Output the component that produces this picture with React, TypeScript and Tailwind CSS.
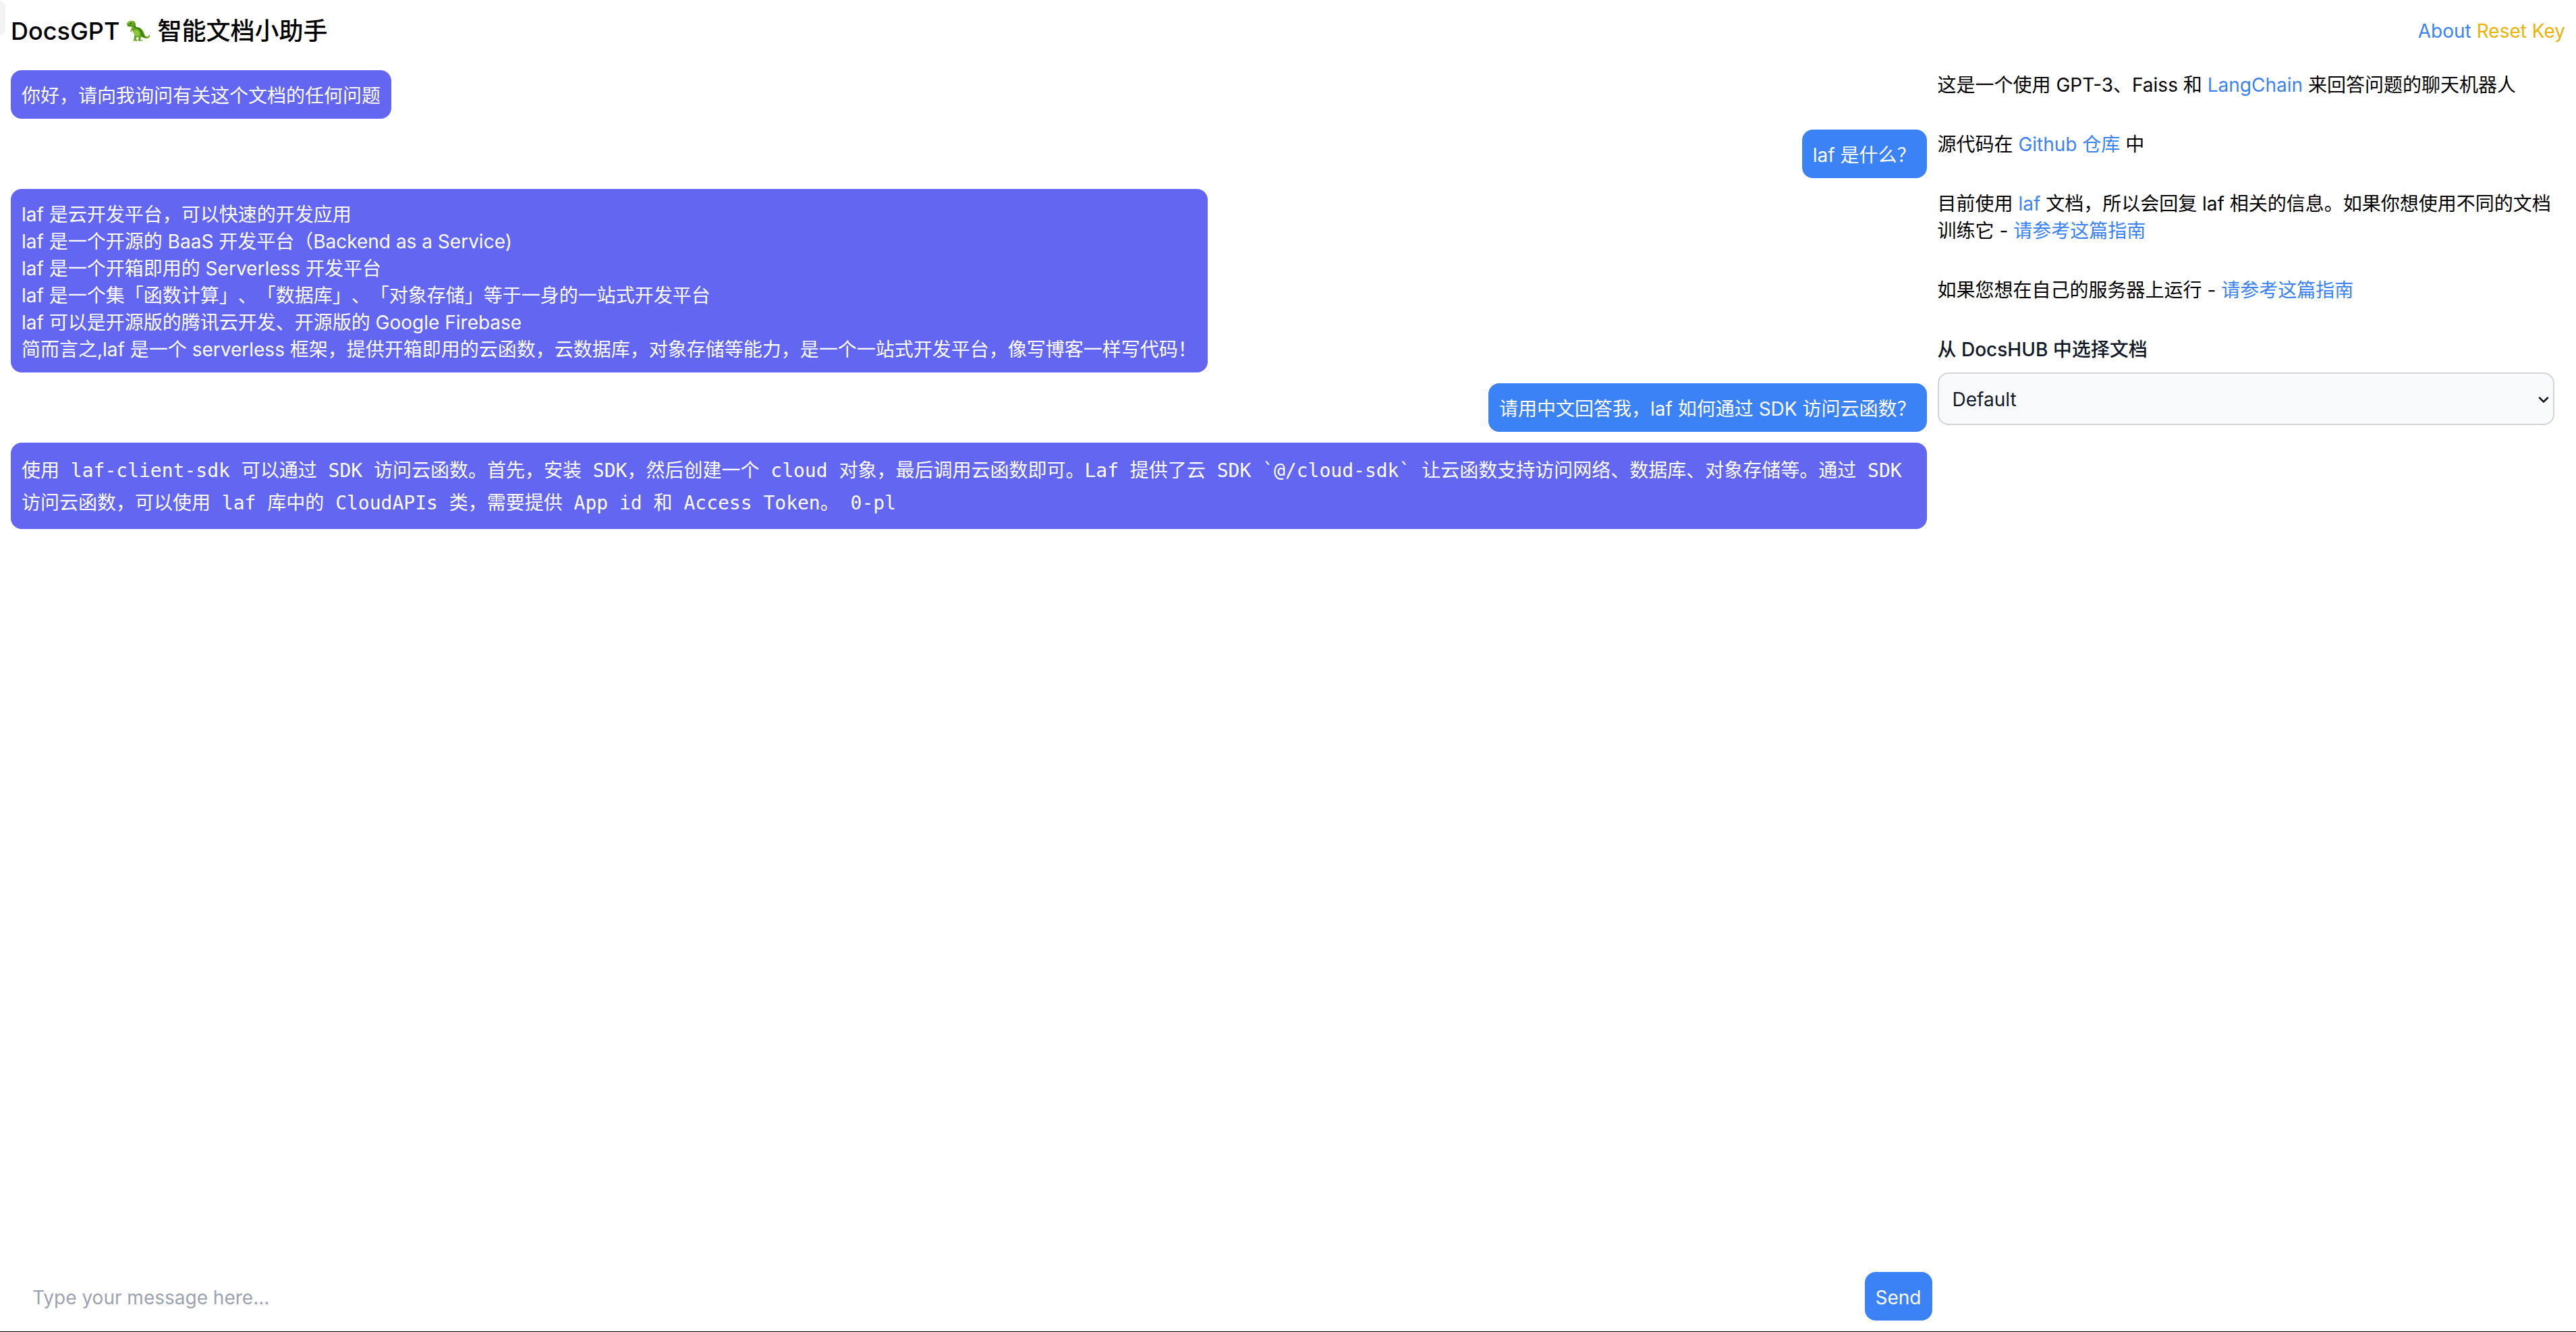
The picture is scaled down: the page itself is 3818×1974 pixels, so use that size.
import { type ReactNode, useState } from "react";

type Message = { from: "bot" | "user"; mono?: boolean; lines: string[] };

const messages: Message[] = [
  { from: "bot", lines: ["你好，请向我询问有关这个文档的任何问题"] },
  { from: "user", lines: ["laf 是什么？"] },
  {
    from: "bot",
    lines: [
      "laf 是云开发平台，可以快速的开发应用",
      "laf 是一个开源的 BaaS 开发平台（Backend as a Service)",
      "laf 是一个开箱即用的 Serverless 开发平台",
      "laf 是一个集「函数计算」、「数据库」、「对象存储」等于一身的一站式开发平台",
      "laf 可以是开源版的腾讯云开发、开源版的 Google Firebase",
      "简而言之,laf 是一个 serverless 框架，提供开箱即用的云函数，云数据库，对象存储等能力，是一个一站式开发平台，像写博客一样写代码！",
    ],
  },
  { from: "user", lines: ["请用中文回答我，laf 如何通过 SDK 访问云函数？"] },
  {
    from: "bot",
    mono: true,
    lines: [
      "使用 laf-client-sdk 可以通过 SDK 访问云函数。首先，安装 SDK，然后创建一个 cloud 对象，最后调用云函数即可。Laf 提供了云 SDK `@/cloud-sdk` 让云函数支持访问网络、数据库、对象存储等。通过 SDK 访问云函数，可以使用 laf 库中的 CloudAPIs 类，需要提供 App id 和 Access Token。 0-pl",
    ],
  },
];

function Bubble({ message }: { message: Message }) {
  const place =
    message.from === "user" ? "self-end bg-[#3b82f6]" : "self-start bg-[#6366f1]";
  const face = message.mono
    ? "font-['DejaVu_Sans_Mono','Noto_Sans_CJK_SC',monospace] leading-[48px]"
    : "leading-10";
  return (
    <div className={`rounded-2xl px-4 pt-[18px] pb-[14px] text-white ${place} ${face}`}>
      {message.lines.map((line) => (
        <p key={line}>{line}</p>
      ))}
    </div>
  );
}

function TextLink({ children }: { children: ReactNode }) {
  return (
    <a href="#" className="text-[#3b82f6]">
      {children}
    </a>
  );
}

function Dinosaur() {
  return (
    <svg viewBox="0 0 36 36" className="mx-2.5 size-9 shrink-0" role="img" aria-label="T-Rex">
      <path
        d="M1 7C2 4 6 2 9 3c3 0 5 2 5 5-.3 2-1 3 1 4 4 0 8 2 10 6 2 3 2 6 4 8 2 1 4 0 5-2 .8-1 1.600 0 1.200 1.200C34 29 30 30 26 28c-2-.6-3-1.500-4-1l-1 3 3 1.500c.8 1-.5 1.500-2 1.200h-4l-.3-2 1-3-3-1-1 3 2 2c.3 1-1 1.300-3 1.100h-2.500l-.2-2 1-2c-.7-2 .2-4 1-5.500-2-2-3-4-3-6l-2 .4-.4 2-1.400-1 .8-2.300C7 15.500 8 14 9 13l-2-1.600-4.500.2L1.600 10Z"
        fill="#63a51b"
      />
      <path
        d="M14 9c-.4 3 1 4 3 4 5 1 7 5 8 9 1 3 3 5 6 5-4 2-8-1-9-4-1-5-3-8-7-9-3-1-4-2-4-4Z"
        fill="#3c7d12"
      />
      <path d="M12 17c2-2 5-1 7 1 2 3 1 7-2 8-3 0-6-3-6.500-6Z" fill="#8cc63b" />
      <path d="M3 9.400l5 .6" stroke="#386f13" strokeWidth="1" fill="none" />
      <path d="M2 6.500c2-2 5-3 8-1.500" stroke="#91c944" strokeWidth="1.200" fill="none" />
      <circle cx="6.500" cy="6.500" r="1" fill="#23420d" />
      <path d="M13 32l1 .7M21 31.500l2 .7" stroke="#e7e3bd" strokeWidth="1" fill="none" />
    </svg>
  );
}

export default function App() {
  const [text, setText] = useState("");
  return (
    <div
      lang="zh-CN"
      className="relative flex min-h-screen flex-col border-b border-black bg-white font-[Inter,'Noto_Sans_CJK_SC',sans-serif] text-[28px] leading-10 text-black [text-spacing-trim:space-all]"
    >
      <span className="absolute top-0.5 left-0 h-[50px] w-2 rounded-r-lg bg-[#f3f3f3]" />
      <header className="flex items-center justify-between px-4 pt-[18px] pb-[14px]">
        <h1 className="flex items-center text-[36px] leading-[56px] font-medium">
          <span>DocsGPT</span>
          <Dinosaur />
          <span>智能文档小助手</span>
        </h1>
        <nav className="flex gap-2">
          <TextLink>About</TextLink>
          <button type="button" className="text-[#eab308]">
            Reset Key
          </button>
        </nav>
      </header>

      <div className="grid flex-1 grid-cols-4">
        <main className="col-span-3 flex flex-col">
          <div className="mt-4 mr-2 ml-4 flex flex-1 flex-col gap-4">
            {messages.map((m) => (
              <Bubble key={m.lines[0]} message={m} />
            ))}
          </div>
          <form className="mb-4 flex pl-4" onSubmit={(e) => e.preventDefault()}>
            <input
              type="text"
              aria-label="Message"
              value={text}
              onChange={(e) => setText(e.target.value)}
              placeholder="Type your message here..."
              className="min-w-0 flex-1 px-8 pt-[18px] pb-[14px] outline-none placeholder:text-[#9ca3af]"
            />
            <button
              type="submit"
              className="rounded-2xl bg-[#3b82f6] px-4 pt-[18px] pb-[14px] text-white"
            >
              Send
            </button>
          </form>
        </main>

        <aside className="mt-[18px] mr-8 ml-2 flex flex-col gap-12">
          <p>
            这是一个使用 GPT-3、Faiss 和 <TextLink>LangChain</TextLink> 来回答问题的聊天机器人
          </p>
          <p>
            源代码在 <TextLink>Github 仓库</TextLink> 中
          </p>
          <p>
            目前使用 <TextLink>laf</TextLink> 文档，所以会回复 laf
            相关的信息。如果你想使用不同的文档训练它 - <TextLink>请参考这篇指南</TextLink>
          </p>
          <p>
            如果您想在自己的服务器上运行 - <TextLink>请参考这篇指南</TextLink>
          </p>
          <div className="flex flex-col gap-3.5">
            <label htmlFor="docs" className="font-medium text-[#111827]">
              从 DocsHUB 中选择文档
            </label>
            <div className="relative">
              <select
                id="docs"
                className="h-[78px] w-full appearance-none rounded-2xl border-2 border-[#d1d5db] bg-[#f9fafb] px-5 pt-0.5 text-[#111827]"
              >
                <option>Default</option>
              </select>
              <svg
                viewBox="0 0 16 10"
                className="pointer-events-none absolute top-9 right-2 h-2.5 w-4"
                fill="none"
                stroke="#111827"
                strokeWidth="2.500"
                strokeLinecap="round"
                strokeLinejoin="round"
              >
                <path d="M2 1.500l6 6 6-6" />
              </svg>
            </div>
          </div>
        </aside>
      </div>
    </div>
  );
}
